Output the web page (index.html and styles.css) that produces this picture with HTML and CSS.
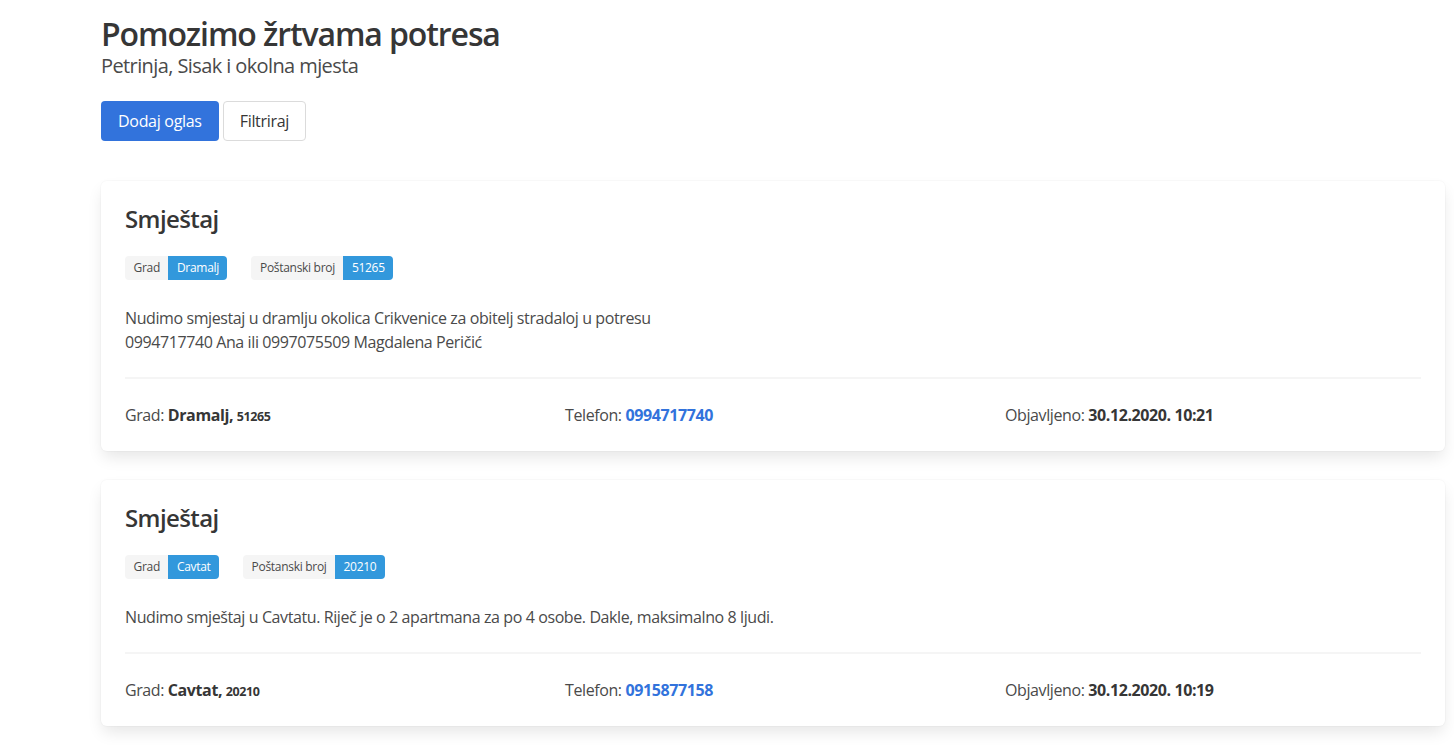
FILE: index.html
```html
<!DOCTYPE html>
<html lang="hr">
<head>
<meta charset="utf-8">
<title>Pomozimo žrtvama potresa</title>
<link rel="stylesheet" href="styles.css">
</head>
<body>
<main class="page">
  <header class="hero">
    <h1 class="title">Pomozimo žrtvama potresa</h1>
    <p class="subtitle">Petrinja, Sisak i okolna mjesta</p>
    <div class="buttons">
      <button class="button is-primary">Dodaj oglas</button>
      <button class="button">Filtriraj</button>
    </div>
  </header>

  <article class="box">
    <h2 class="box-title">Smještaj</h2>
    <div class="tag-row">
      <span class="tags"><span class="tag">Grad</span><span class="tag is-info">Dramalj</span></span>
      <span class="tags"><span class="tag">Poštanski broj</span><span class="tag is-info">51265</span></span>
    </div>
    <p class="desc">Nudimo smjestaj u dramlju okolica Crikvenice za obitelj stradaloj u potresu<br>0994717740 Ana ili 0997075509 Magdalena Peričić</p>
    <hr class="sep">
    <div class="columns">
      <div class="column">Grad: <strong>Dramalj,</strong> <strong class="small">51265</strong></div>
      <div class="column">Telefon: <a class="phone" href="#">0994717740</a></div>
      <div class="column">Objavljeno: <strong>30.12.2020. 10:21</strong></div>
    </div>
  </article>

  <article class="box">
    <h2 class="box-title">Smještaj</h2>
    <div class="tag-row">
      <span class="tags"><span class="tag">Grad</span><span class="tag is-info">Cavtat</span></span>
      <span class="tags"><span class="tag">Poštanski broj</span><span class="tag is-info">20210</span></span>
    </div>
    <p class="desc">Nudimo smještaj u Cavtatu. Riječ je o 2 apartmana za po 4 osobe. Dakle, maksimalno 8 ljudi.</p>
    <hr class="sep">
    <div class="columns">
      <div class="column">Grad: <strong>Cavtat,</strong> <strong class="small">20210</strong></div>
      <div class="column">Telefon: <a class="phone" href="#">0915877158</a></div>
      <div class="column">Objavljeno: <strong>30.12.2020. 10:19</strong></div>
    </div>
  </article>
</main>
</body>
</html>
```

FILE: styles.css
```css
* { box-sizing: border-box; }
html, body { margin: 0; padding: 0; background: #fff; }
body {
  font-family: "Open Sans", "Noto Sans", "Liberation Sans", sans-serif;
  font-size: 16px;
  line-height: 1.5;
  color: #4a4a4a;
  overflow: hidden;
}
.page {
  width: 1344px;
  margin-left: 101px;
  padding-top: 16px;
}
.hero { margin-bottom: 40px; }
.title {
  margin: 0;
  font-size: 32px;
  font-weight: 600;
  line-height: 1.125;
  color: #363636;
  letter-spacing: -1.1px;
}
.subtitle {
  margin: 1px 0 0;
  font-size: 20px;
  line-height: 1.25;
  color: #4a4a4a;
  letter-spacing: -0.6px;
}
.buttons { display: flex; gap: 4px; margin-top: 23px; }
.button {
  font-family: inherit;
  font-size: 16px;
  height: 40px;
  padding: 0 16px;
  border: 1px solid #dbdbdb;
  border-radius: 4px;
  background: #fff;
  color: #363636;
  letter-spacing: -0.3px;
}
.button.is-primary { background: #3273dc; border-color: transparent; color: #fff; }
.box {
  background: #fff;
  border-radius: 6px;
  box-shadow: 0 8px 16px -2px rgba(10,10,10,0.1), 0 0 0 1px rgba(10,10,10,0.02);
  padding: 24px 24px 22px;
  margin-bottom: 29px;
  letter-spacing: -0.4px;
}
.box-title {
  margin: 0 0 24px;
  font-size: 24px;
  font-weight: 600;
  line-height: 1.125;
  color: #363636;
  letter-spacing: -0.6px;
}
.tag-row { display: flex; gap: 24px; margin-bottom: 26px; }
.tags { display: inline-flex; }
.tag {
  display: inline-flex;
  align-items: center;
  height: 24px;
  padding: 0 8.5px;
  font-size: 12px;
  letter-spacing: -0.3px;
  background: #f5f5f5;
  color: #4a4a4a;
  border-radius: 4px 0 0 4px;
}
.tag.is-info { background: #3298dc; color: #fff; border-radius: 0 4px 4px 0; }
.desc { margin: 0; }
.sep {
  border: none;
  height: 2px;
  background: #f5f5f5;
  margin: 23px 0 24px;
}
.columns { display: flex; margin: 0 -12px; }
.column { flex: 1 1 0; padding: 0 12px; line-height: 24px; }
strong { font-weight: 700; color: #363636; }
.small { font-size: 12.5px; }
.phone { color: #3273dc; font-weight: 700; text-decoration: none; }
```
